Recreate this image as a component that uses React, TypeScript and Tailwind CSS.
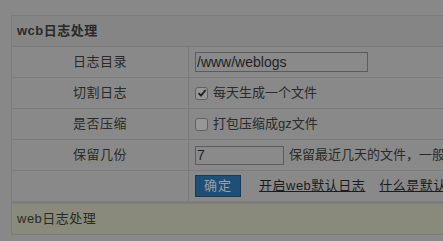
export default function App() {
    return (
        <div className="w-[443px] h-[241px] overflow-hidden bg-[#888888] pt-[15px] pl-[11px]" style={{ fontFamily: '"Liberation Sans", "Noto Sans CJK SC", sans-serif' }}>
            <div className="w-[520px] border border-[#7b7b7b] bg-[#898989] text-[13px] text-[#2a2a2a]">
                <Header />
                <Row label="日志目录">
                    <input readOnly value="/www/weblogs" className="w-[173px] h-[20px] border border-[#5c5c5c] bg-[#8a8a8a] px-[1px] text-[14px] text-[#1f1f1f] outline-none" />
                </Row>
                <Row label="切割日志">
                    <Check checked />
                    <span className="ml-[5px]">每天生成一个文件</span>
                </Row>
                <Row label="是否压缩">
                    <Check />
                    <span className="ml-[5px]">打包压缩成gz文件</span>
                </Row>
                <Row label="保留几份">
                    <input readOnly value="7" className="w-[89px] h-[19px] border border-[#5c5c5c] bg-[#8a8a8a] px-[1px] text-[14px] text-[#1f1f1f] outline-none" />
                    <span className="ml-[5px] whitespace-nowrap">保留最近几天的文件，一般保留7天</span>
                </Row>
                <Actions />
                <Footer />
            </div>
        </div>
    )
}

function Header() {
    return (
        <div className="h-[31px] flex items-center px-[5px] bg-[#858585] border-b border-[#7b7b7b] font-bold tracking-[0.5px]">
            wcb日志处理
        </div>
    )
}

function Row({ label, children }: { label: string; children: React.ReactNode }) {
    return (
        <div className="flex h-[31px] border-b border-[#7b7b7b]">
            <div className="w-[177px] flex items-center justify-center border-r border-[#7b7b7b] tracking-[0.5px]">
                {label}
            </div>
            <div className="flex items-center pl-[6px]">
                {children}
            </div>
        </div>
    )
}

function Check({ checked = false }: { checked?: boolean }) {
    return (
        <span className="w-[13px] h-[13px] rounded-[3px] border border-[#606060] bg-[#979797] flex items-center justify-center">
            {checked && (
                <svg width="10" height="10" viewBox="0 0 10 10">
                    <path d="M1.5 5.2 L4 7.6 L8.6 2" fill="none" stroke="#1e1e1e" strokeWidth="1.8" />
                </svg>
            )}
        </span>
    )
}

function Actions() {
    return (
        <div className="flex h-[33px] border-b-[3px] border-[#7d7d7d]">
            <div className="w-[177px] border-r border-[#7b7b7b]" />
            <div className="flex items-center pl-[6px] whitespace-nowrap">
                <button className="w-[46px] h-[22px] bg-[#1f4e76] border border-[#15395a] text-[#9aa2ab] text-[13px] tracking-[1px]">确定</button>
                <a className="ml-[18px] underline tracking-[0.5px] text-[#1c1c1c]">开启web默认日志</a>
                <a className="ml-[14px] underline tracking-[0.5px] text-[#1c1c1c]">什么是默认日志</a>
            </div>
        </div>
    )
}

function Footer() {
    return (
        <div className="h-[30px] flex items-center px-[5px] bg-[#898a7b] tracking-[0.5px]">
            web日志处理
        </div>
    )
}
